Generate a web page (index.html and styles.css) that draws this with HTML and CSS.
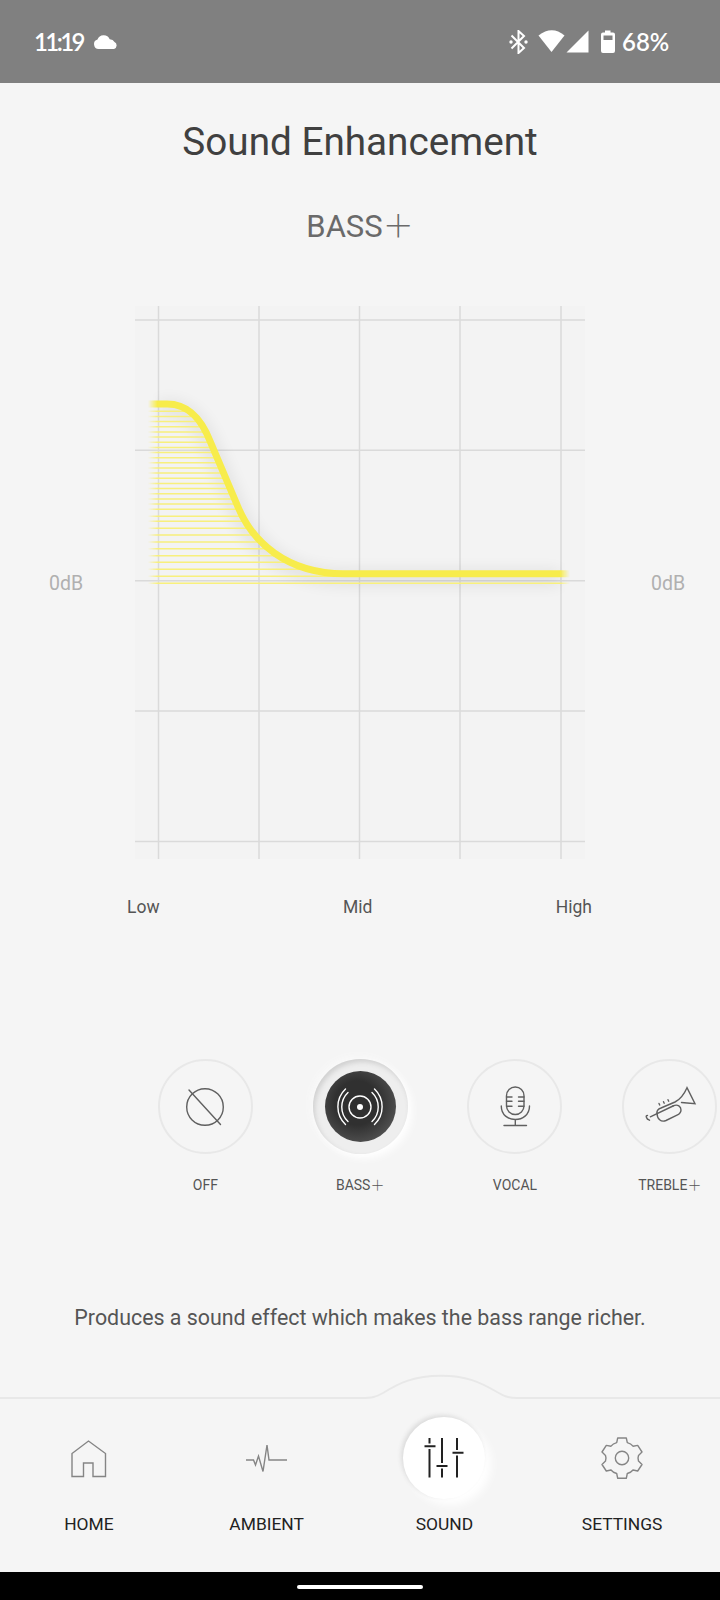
FILE: index.html
```
<!DOCTYPE html>
<html lang="en">
  <head>
    <meta charset="UTF-8" />
    <meta name="viewport" content="width=device-width, initial-scale=1.0" />
    <title>Sound Enhancement</title>
    <link rel="stylesheet" href="styles.css">
  </head>
  <body>
    <div class="status-bar">
      <span class="time">11:19</span>
      <svg class="cloud" width="24" height="14" viewBox="0 0 24 14">
        <path d="M5 14A4.800 4.800 0 0 1 3.500 4.600A6.500 6.500 0 0 1 15.700 4.200A5.300 5.300 0 0 1 20.500 7A3.800 3.800 0 0 1 20 14Z" fill="#fff" />
      </svg>
      <svg class="status-icons" width="108" height="24" viewBox="0 0 108 24">
        <path d="M2.500 5.500L15 18L9.500 23V1L15 6L2.500 18.500" fill="none" stroke="#fff" stroke-width="2" />
        <circle cx="2" cy="12" r="1.700" fill="#fff" />
        <circle cx="17" cy="12" r="1.700" fill="#fff" />
        <path d="M29.500 5.500Q43 -5 55.500 5.500L42.500 22Z" fill="#fff" />
        <path d="M57.500 22.500L79.500 0.500V22.500Z" fill="#fff" />
        <path d="M96 0.500H101.500V2.500H104Q106 2.500 106 4.500V21Q106 23 104 23H94Q92 23 92 21V4.500Q92 2.500 94 2.500H96Z" fill="#fff" />
        <path d="M94.500 5.500H103.500V10H94.500Z" fill="#808080" />
      </svg>
      <span class="battery">68%</span>
    </div>

    <main class="content">
      <h1>Sound Enhancement</h1>
      <h2>BASS<span class="plus">&#xFF0B;</span></h2>

      <div class="chart-row">
        <span class="db">0dB</span>
        <svg class="chart" width="450" height="553" viewBox="135 306 450 553">
          <defs>
            <linearGradient id="fade" gradientUnits="userSpaceOnUse" x1="148" y1="0" x2="570" y2="0">
              <stop offset="0" stop-color="#fff" stop-opacity="0" />
              <stop offset="0.022" stop-color="#fff" />
              <stop offset="0.976" stop-color="#fff" />
              <stop offset="1" stop-color="#fff" stop-opacity="0" />
            </linearGradient>
            <mask id="edges" maskUnits="userSpaceOnUse" x="135" y="306" width="450" height="553">
              <rect x="135" y="306" width="450" height="553" fill="url(#fade)" />
            </mask>
            <clipPath id="under">
              <path d="M146 404H167C190 404 202 421 210 441L238 507C252 541 286 573.700 344 573.700H572V590H146Z" />
            </clipPath>
            <filter id="shadow" filterUnits="userSpaceOnUse" x="135" y="370" width="450" height="250">
              <feGaussianBlur stdDeviation="8" />
            </filter>
          </defs>
          <rect x="135" y="306" width="450" height="553" fill="#f3f3f3" />
          <path class="grid" d="M158.500 306V859M259 306V859M359.500 306V859M460 306V859M561 306V859M135 320H585M135 450.200H585M135 580.700H585M135 711H585M135 841.500H585" />
          <g mask="url(#edges)">
            <path class="curve-shadow" filter="url(#shadow)" d="M158 408H167C190 408 202 425 210 445L238 511C252 545 286 577.700 344 577.700H560" />
            <g clip-path="url(#under)">
              <path class="fill-lines" d="M146 411.300H572M146 416.500H572M146 421.600H572M146 426.800H572M146 431.900H572M146 437.100H572M146 442.200H572M146 447.400H572M146 452.500H572M146 457.700H572M146 462.800H572M146 468H572M146 473.100H572M146 478.300H572M146 483.400H572M146 488.600H572M146 493.700H572M146 498.900H572M146 504H572M146 509.200H572M146 516.300H572M146 521.300H572M146 528.300H572M146 535H572M146 542H572M146 548.700H572M146 555.700H572M146 562.300H572M146 569.300H572M146 576.300H572M146 583.200H572" />
            </g>
            <path class="curve" d="M146 404H167C190 404 202 421 210 441L238 507C252 541 286 573.700 344 573.700H572" />
          </g>
        </svg>
        <span class="db right">0dB</span>
      </div>
      <div class="axis">
        <span>Low</span>
        <span>Mid</span>
        <span>High</span>
      </div>

      <div class="presets">
        <div class="preset">
          <div class="knob">
            <svg width="60" height="60" viewBox="0 0 60 60">
              <circle cx="30" cy="30" r="18.300" />
              <path d="M14 13L45.500 47.500" />
            </svg>
          </div>
          <span>OFF</span>
        </div>
        <div class="preset">
          <div class="knob active">
            <div class="disc">
              <svg width="60" height="60" viewBox="0 0 60 60">
                <circle cx="30" cy="30" r="11" />
                <circle cx="30" cy="30" r="3" fill="#fff" stroke="none" />
                <path d="M18 15.500A20 20 0 0 0 18 44.500M15.500 12A24.500 24.500 0 0 0 15.500 47.500M42 15.500A20 20 0 0 1 42 44.500M44.500 12A24.500 24.500 0 0 1 44.500 47.500" />
              </svg>
            </div>
          </div>
          <span>BASS<span class="plus">&#xFF0B;</span></span>
        </div>
        <div class="preset">
          <div class="knob">
            <svg width="60" height="60" viewBox="0 0 60 60">
              <rect x="21.500" y="10" width="17.500" height="27.500" rx="8.700" />
              <path d="M21.500 20H27M21.500 24.300H27M21.500 29.300H27M39 20H33.500M39 24.300H33.500M39 29.300H33.500M16.300 29C16 47 44.500 47 44.500 29M30.300 42.500V48.500M19 48.500H41.500" />
            </svg>
          </div>
          <span>VOCAL</span>
        </div>
        <div class="preset">
          <div class="knob">
            <svg width="60" height="60" viewBox="0 0 60 60">
              <path d="M17 36C16.500 33 18.500 32 21 31L35 25C41 22 44 17.500 47 10.700L55 26.700L41.500 25.500" />
              <path d="M7.500 38.500Q5.500 38.500 6.500 40.500Q7 42.500 9.500 43.200M10.300 39.800L33 29" />
              <path d="M33 29C38 26.500 41 30 41 33C41 36 39.500 37 37 38.200L26 43.500C21 45.500 17 42 17 36" />
              <path d="M19 26.500L19.700 28M23.500 24.700L24.200 26.200M28 22.700L28.700 24.200" />
            </svg>
          </div>
          <span>TREBLE<span class="plus">&#xFF0B;</span></span>
        </div>
      </div>

      <p class="description">Produces a sound effect which makes the bass range richer.</p>
    </main>

    <svg class="nav-line" width="720" height="26" viewBox="0 0 720 26">
      <path d="M0 24H362C372 24 376 23 383 19C399 9 414 1.700 441 1.700C466 1.700 480 8 497 18C504 22 508 24 517 24H720" />
    </svg>
    <nav class="nav">
      <a class="nav-item">
        <div class="nav-icon">
          <svg width="46" height="46" viewBox="0 0 46 46">
            <path d="M6 41.500V18.500L22.500 6L39.500 18.500V41.500H27V28H17.500V41.500Z" />
          </svg>
        </div>
        <span>HOME</span>
      </a>
      <a class="nav-item">
        <div class="nav-icon">
          <svg width="46" height="46" viewBox="0 0 46 46">
            <path d="M2 25H9.500L11.500 30L14.500 21L19 36.500L23 10L25 25H43" />
          </svg>
        </div>
        <span>AMBIENT</span>
      </a>
      <a class="nav-item">
        <div class="nav-icon selected">
          <svg width="46" height="46" viewBox="0 0 46 46">
            <path d="M8.500 3V8.500M8.500 14V42.500M3.500 11.300H14.500M21 3V28M21 33.500V42.500M15.500 31H26.500M36 3V15M36 20.500V42.500M31.500 17.700H42.500" />
          </svg>
        </div>
        <span>SOUND</span>
      </a>
      <a class="nav-item">
        <div class="nav-icon">
          <svg width="46" height="46" viewBox="0 0 46 46">
            <circle cx="23" cy="23" r="6.700" />
            <path d="M18.700 3H27.300L28.300 7.600Q32 8.500 34 11.200L38.700 10.400L43 17L39.500 20.500Q38.500 23 39.500 26L43 29.500L38.700 36L34 35Q32 37.500 28.300 38.500L27.300 43.300H18.700L17.700 38.500Q14 37.500 12 35L7.300 36L3 29.500L6.500 26Q7.500 23 6.500 20.500L3 17L7.300 10.400L12 11.200Q14 8.500 17.700 7.600Z" stroke-linejoin="round" />
          </svg>
        </div>
        <span>SETTINGS</span>
      </a>
    </nav>

    <div class="gesture-bar">
      <div class="handle"></div>
    </div>
  </body>
</html>
```
FILE: styles.css
```
/* Basic styles */
body {
  margin: 0;
  width: 720px;
  height: 1600px;
  display: flex;
  flex-direction: column;
  background-color: #f5f5f5;
  font-family: Roboto, "Liberation Sans", sans-serif;
  color: #555;
  overflow: hidden;
}

svg {
  display: block;
  flex: none;
}

/* Status bar */
.status-bar {
  box-sizing: border-box;
  height: 83px;
  padding-left: 34px;
  display: flex;
  align-items: center;
  background-color: #808080;
  color: #fff;
  font-family: Lato, sans-serif;
  font-size: 24px;
  font-weight: 600;
}

.time {
  width: 60px;
  letter-spacing: -2.6px;
}

.status-icons {
  margin-left: 391px;
}

.battery {
  margin-left: 5px;
}

/* Main content */
.content {
  height: 1291px;
  display: flex;
  flex-direction: column;
}

h1 {
  margin: 37px 0 0;
  font-size: 38.7px;
  line-height: 44px;
  font-weight: 400;
  text-align: center;
  color: #404040;
}

h2 {
  margin: 43px 0 0;
  height: 40px;
  font-size: 31px;
  line-height: 40px;
  font-weight: 400;
  text-align: center;
  color: #6a6a6a;
}

.plus {
  font-family: "Noto Sans CJK JP", sans-serif;
  font-weight: 300;
  line-height: 1;
}

/* Chart */
.chart-row {
  margin-top: 59px;
  height: 553px;
  display: flex;
  align-items: center;
}

.db {
  box-sizing: border-box;
  width: 135px;
  padding: 1px 0 0 49px;
  font-size: 19.5px;
  color: #b0b0b0;
}

.db.right {
  padding-left: 66px;
}

.grid {
  fill: none;
  stroke: #dadada;
  stroke-width: 1.5;
}

.curve {
  fill: none;
  stroke: #f7ec4b;
  stroke-width: 7;
}

.curve-shadow {
  fill: none;
  stroke: #000;
  stroke-width: 14;
  opacity: 0.08;
}

.fill-lines {
  stroke: #f8f07c;
  stroke-width: 1.5;
}

.axis {
  margin: 37px 128px 0 127px;
  display: flex;
  justify-content: space-between;
  font-size: 17.5px;
  line-height: 22px;
}

/* Presets */
.presets {
  margin: 141px 0 0 128px;
  display: flex;
}

.preset {
  flex: none;
  width: 154.8px;
  display: flex;
  flex-direction: column;
  align-items: center;
  font-size: 14px;
  line-height: 20px;
}

.knob {
  box-sizing: border-box;
  width: 95px;
  height: 95px;
  margin-bottom: 21px;
  display: flex;
  align-items: center;
  justify-content: center;
  border: 2px solid #e8e8e8;
  border-radius: 50%;
}

.knob svg {
  fill: none;
  stroke: #606060;
  stroke-width: 1.4;
  stroke-linecap: round;
}

.knob.active {
  border: none;
  background-color: #eee;
  box-shadow: inset 2px 3px 5px #d0d0d0, 4px 4px 8px #fff, -2px -2px 8px #fafafa;
}

.disc {
  width: 71px;
  height: 71px;
  display: flex;
  align-items: center;
  justify-content: center;
  border-radius: 50%;
  background: radial-gradient(circle at 45% 45%, #303030 40%, #505050 75%);
}

.knob .disc svg {
  stroke: #fff;
}

.description {
  margin: 109px 0 0;
  font-size: 21.4px;
  line-height: 28px;
  text-align: center;
}

/* Bottom navigation */
.nav-line path {
  fill: none;
  stroke: #e8e8e8;
  stroke-width: 2;
}

.nav {
  height: 172px;
  padding-right: 9px;
  display: flex;
}

.nav-item {
  flex: 1;
  display: flex;
  flex-direction: column;
  align-items: center;
  font-size: 17.4px;
  line-height: 22px;
  color: #222;
}

.nav-icon {
  width: 82px;
  height: 82px;
  margin: 17px 0 14px;
  display: flex;
  align-items: center;
  justify-content: center;
  border-radius: 50%;
}

.nav-icon svg {
  fill: none;
  stroke: #858585;
  stroke-width: 1.4;
}

.nav-icon.selected {
  background-color: #fff;
  box-shadow: -2px -2px 4px #dcdcdc, 6px 6px 10px #fff;
}

.nav-icon.selected svg {
  stroke: #222;
  stroke-width: 2;
}

.gesture-bar {
  box-sizing: border-box;
  height: 28px;
  display: flex;
  align-items: center;
  justify-content: center;
  padding-top: 2px;
  background-color: #000;
}

.handle {
  width: 126px;
  height: 4px;
  border-radius: 2px;
  background-color: #fff;
}
```
